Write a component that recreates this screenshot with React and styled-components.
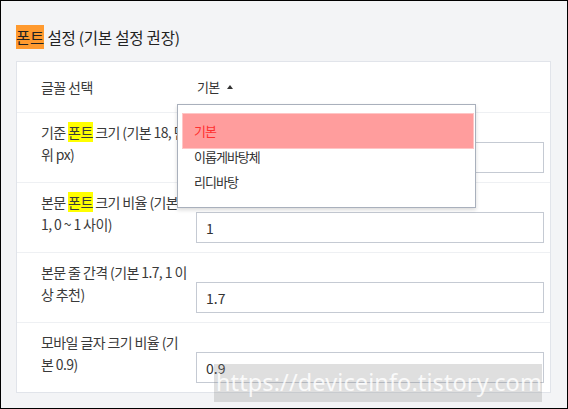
import React, { useState } from "react";
import styled, { createGlobalStyle } from "styled-components";

const GlobalStyle = createGlobalStyle`
  html, body {
    margin: 0;
    padding: 0;
    background: #f3f4f6;
  }
  * {
    box-sizing: border-box;
  }
`;

const FONT = `"Noto Sans CJK KR", "Noto Sans", sans-serif`;

const fontOptions = ["기본", "이롭게바탕체", "리디바탕"];

const settings = [
  {
    label: (
      <>
        기준 <Yellow>폰트</Yellow> 크기 (기본 18, 단위 px)
      </>
    ),
    value: "",
  },
  {
    label: (
      <>
        본문 <Yellow>폰트</Yellow> 크기 비율 (기본 1, 0 ~ 1 사이)
      </>
    ),
    value: "1",
  },
  { label: "본문 줄 간격 (기본 1.7, 1 이상 추천)", value: "1.7" },
  { label: "모바일 글자 크기 비율 (기본 0.9)", value: "0.9" },
];

function Yellow({ children }) {
  return <Mark $color="#ffff00">{children}</Mark>;
}

const App = () => {
  const [selected, setSelected] = useState("기본");
  const [values, setValues] = useState(settings.map((s) => s.value));

  const handleChange = (i) => (e) => {
    const next = [...values];
    next[i] = e.target.value;
    setValues(next);
  };

  return (
    <>
      <GlobalStyle />
      <Frame>
        <Title>
          <Mark $color="#ff9a2f" $pad>폰트</Mark> 설정 (기본 설정 권장)
        </Title>

        <Card>
          <Row $first>
            <Label>글꼴 선택</Label>
            <Toggle>
              {selected}
              <Caret />
              <Menu>
                {fontOptions.map((name) => (
                  <MenuItem
                    key={name}
                    $active={name === selected}
                    onClick={() => setSelected(name)}
                  >
                    {name}
                  </MenuItem>
                ))}
              </Menu>
            </Toggle>
          </Row>

          {settings.map((s, i) => (
            <Row key={i}>
              <Label>{s.label}</Label>
              <Input value={values[i]} onChange={handleChange(i)} />
            </Row>
          ))}
        </Card>

        <Watermark>https://deviceinfo.tistory.com</Watermark>
      </Frame>
    </>
  );
};

const Frame = styled.div`
  position: relative;
  width: 568px;
  height: 409px;
  border: 1px solid #000;
  background: #f3f4f6;
  padding: 24px 16px 0 15px;
  overflow: hidden;
  font-family: ${FONT};
  color: #333;
`;

const Title = styled.h2`
  margin: 0 0 12px;
  font-size: 15.5px;
  font-weight: 400;
  line-height: 24px;
  letter-spacing: -0.2px;
  color: #222;
`;

const Mark = styled.span`
  background: ${(p) => p.$color};
  padding: ${(p) => (p.$pad ? "1px 0" : "0")};
`;

const Card = styled.div`
  background: #fff;
  border: 1px solid #e1e4ea;
`;

const Row = styled.div`
  display: grid;
  grid-template-columns: 155px 1fr;
  height: ${(p) => (p.$first ? "50px" : "70px")};
  padding: ${(p) => (p.$first ? "0 6px 0 24px" : "0 6px 9px 24px")};
  border-top: ${(p) => (p.$first ? "none" : "1px solid #eef0f3")};
`;

const Label = styled.div`
  align-self: center;
  padding-right: 8px;
  font-size: 14px;
  line-height: 22px;
  letter-spacing: -0.6px;
  word-break: break-all;
  color: #3a3a3a;
`;

const Toggle = styled.div`
  position: relative;
  align-self: center;
  display: flex;
  align-items: center;
  padding-left: 1px;
  font-size: 13px;
  line-height: 22px;
  letter-spacing: -0.8px;
  color: #333;
  cursor: pointer;
`;

const Caret = styled.span`
  width: 0;
  height: 0;
  margin-left: 8px;
  border-left: 3px solid transparent;
  border-right: 3px solid transparent;
  border-bottom: 4px solid #333;
`;

const Menu = styled.div`
  position: absolute;
  top: calc(100% + 6px);
  left: -19px;
  width: 299px;
  padding: 13px 1px 12px 4px;
  background: #fff;
  border: 1px solid #a9b0bc;
  box-shadow: 0 2px 4px rgba(0, 0, 0, 0.15);
  z-index: 2;
`;

const MenuItem = styled.div`
  font-size: 13px;
  line-height: 25.6px;
  letter-spacing: -1px;
  padding: ${(p) => (p.$active ? "4px 11px" : "0 12px")};
  margin: ${(p) => (p.$active ? "-5px 0" : "0")};
  background: ${(p) => (p.$active ? "#ff9d9d" : "transparent")};
  border: ${(p) => (p.$active ? "1px solid #ffc6c6" : "none")};
  color: ${(p) => (p.$active ? "#ff3030" : "#333")};
`;

const Input = styled.input`
  align-self: end;
  width: 348px;
  height: 31px;
  padding: 0 9px;
  border: 1px solid #c5cad3;
  border-radius: 0;
  background: #fff;
  font-family: ${FONT};
  font-size: 14px;
  color: #333;
  outline: none;
`;

const Watermark = styled.div`
  position: absolute;
  left: 213px;
  top: 363px;
  width: 328px;
  height: 38px;
  padding-left: 2px;
  background: rgba(127, 127, 127, 0.25);
  color: rgba(255, 255, 255, 0.85);
  font-family: "Noto Sans", sans-serif;
  font-size: 23.5px;
  line-height: 36px;
  letter-spacing: 0.1px;
  white-space: nowrap;
  pointer-events: none;
  z-index: 3;
`;

export default App;
